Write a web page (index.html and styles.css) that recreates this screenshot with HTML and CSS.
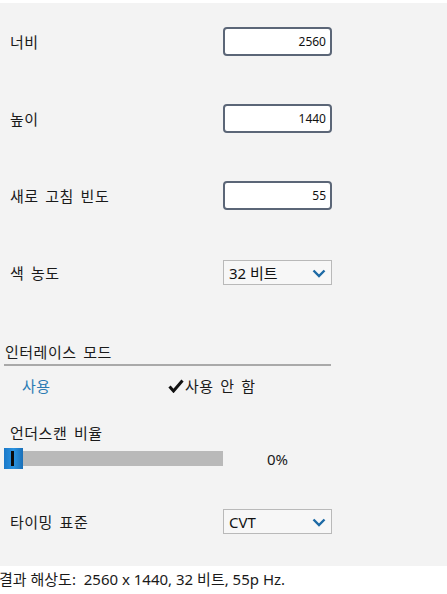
FILE: index.html
```html
<!DOCTYPE html>
<html lang="ko">
<head>
<meta charset="utf-8">
<link rel="stylesheet" href="styles.css">
</head>
<body>
<div class="panel">
  <div class="fields">
    <div class="field">
      <span class="label">너비</span>
      <div class="num-input">2560</div>
    </div>
    <div class="field">
      <span class="label">높이</span>
      <div class="num-input">1440</div>
    </div>
    <div class="field">
      <span class="label">새로 고침 빈도</span>
      <div class="num-input">55</div>
    </div>
    <div class="field">
      <span class="label">색 농도</span>
      <div class="select"><span>32 비트</span>
        <svg class="chev" width="14" height="9" viewBox="0 0 14 9"><path d="M1.5 1.5 L7 7 L12.5 1.5" fill="none" stroke="#1d6aa5" stroke-width="2.4"/></svg>
      </div>
    </div>
  </div>

  <div class="section-head">인터레이스 모드</div>
  <div class="options">
    <span class="opt on">사용</span>
    <span class="opt off"><svg class="check" width="16" height="14" viewBox="0 0 16 14"><path d="M1.5 7.5 L5.5 12 L14.5 1.5" fill="none" stroke="#111" stroke-width="3" stroke-linejoin="miter"/></svg>사용 안 함</span>
  </div>

  <div class="sub-label">언더스캔 비율</div>
  <div class="slider-row">
    <div class="track"><div class="thumb"><span class="grip"></span></div></div>
    <span class="pct">0%</span>
  </div>

  <div class="field timing">
    <span class="label">타이밍 표준</span>
    <div class="select"><span>CVT</span>
      <svg class="chev" width="14" height="9" viewBox="0 0 14 9"><path d="M1.5 1.5 L7 7 L12.5 1.5" fill="none" stroke="#1d6aa5" stroke-width="2.4"/></svg>
    </div>
  </div>
</div>
<div class="result">결과 해상도:&nbsp; 2560 x 1440, 32 비트, 55p Hz.</div>
</body>
</html>
```

FILE: styles.css
```css
* { box-sizing: border-box; }
html, body { margin: 0; padding: 0; background: #ffffff; }
body {
  font-family: "Noto Sans", "Noto Sans CJK KR", sans-serif;
  color: #1a1a1a;
  width: 447px;
  height: 594px;
  overflow: hidden;
}
.panel {
  margin-top: 3px;
  height: 563px;
  background: #f3f3f3;
  padding: 24px 0 0 10px;
}
.fields {
  display: flex;
  flex-direction: column;
  gap: 48px;
}
.field {
  display: flex;
  align-items: center;
  height: 29px;
}
.label {
  width: 213px;
  font-family: "Noto Sans CJK KR", sans-serif;
  font-size: 15px;
  letter-spacing: 0.5px;
  word-spacing: 2px;
  line-height: 20px;
}
.num-input {
  width: 109px;
  height: 29px;
  border: 2px solid #5b6677;
  border-radius: 4px;
  background: #ffffff;
  font-size: 12px;
  line-height: 25px;
  text-align: right;
  padding-right: 4px;
  color: #111;
}
.select {
  width: 109px;
  height: 25px;
  border: 1px solid #b9b9b9;
  background: #f7f7f7;
  display: flex;
  align-items: center;
  justify-content: space-between;
  padding: 0 5px 0 5px;
  font-family: "Noto Sans", "Noto Sans CJK KR", sans-serif;
  font-size: 15px;
  color: #111;
}
.chev { display: block; margin-top: 1px; }
.section-head {
  margin: 55px 0 0 -6px;
  width: 327px;
  font-family: "Noto Sans CJK KR", sans-serif;
  font-size: 15px;
  letter-spacing: 0.5px;
  word-spacing: 2px;
  line-height: 20px;
  padding: 0 0 2px 1px;
  border-bottom: 2px solid #a9a9a9;
}
.options {
  display: flex;
  margin-top: 10px;
  height: 20px;
  align-items: center;
  font-family: "Noto Sans CJK KR", sans-serif;
  font-size: 15px;
  letter-spacing: 0.5px;
  line-height: 20px;
}
.opt.on { color: #2b7bb3; margin-left: 12px; width: 146px; }
.opt.off { display: flex; align-items: center; word-spacing: 2px; }
.check { display: block; margin-right: 1px; }
.sub-label {
  margin-top: 27px;
  font-family: "Noto Sans CJK KR", sans-serif;
  font-size: 15px;
  letter-spacing: 0.5px;
  word-spacing: 2px;
  line-height: 20px;
}
.slider-row {
  display: flex;
  align-items: center;
  margin: 5px 0 0 -6px;
  height: 21px;
}
.track {
  width: 219px;
  height: 15px;
  background: #b9b9b9;
  position: relative;
}
.thumb {
  position: absolute;
  left: 0;
  top: -3px;
  width: 19px;
  height: 21px;
  background: linear-gradient(90deg, #1a78c8, #2a93e0 50%, #1a6fb8);
}
.grip {
  position: absolute;
  left: 7px;
  top: 3px;
  width: 3px;
  height: 15px;
  background: #0b0b0b;
}
.pct {
  margin-left: 44px;
  font-size: 15px;
  color: #1a1a1a;
}
.field.timing { margin-top: 38px; }
.result {
  margin: 3px 0 0 -1px;
  font-family: "Noto Sans", "Noto Sans CJK KR", sans-serif;
  font-size: 15px;
  line-height: 20px;
  color: #1a1a1a;
  white-space: nowrap;
}
```
